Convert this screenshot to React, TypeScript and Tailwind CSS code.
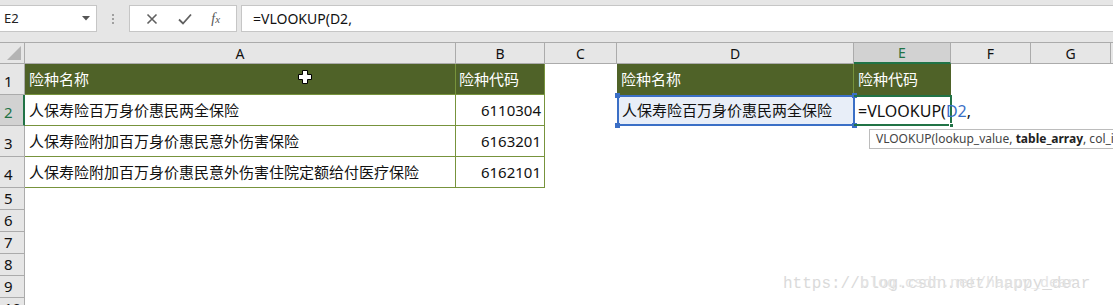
import React from "react";

const cellFont = {
  fontFamily: '"Noto Sans", "Noto Sans CJK SC", sans-serif',
};

const colLetters = [
  { key: "A", w: "w-[431px]" },
  { key: "B", w: "w-[89px]" },
  { key: "C", w: "w-[72px]" },
  { key: "D", w: "w-[237px]" },
  { key: "E", w: "w-[97px]" },
  { key: "F", w: "w-[80px]" },
  { key: "G", w: "w-[80px]" },
];

const FormulaBar: React.FC = () => (
  <div className="h-[43px] bg-[#e6e6e6] border-b border-[#ababab] flex items-start pt-[5px]">
    <div className="w-[97px] h-[27px] bg-white border border-[#c6c6c6] border-l-0 flex items-center justify-between pl-[4px] pr-[6px]">
      <span className="text-[13px] text-[#222]">E2</span>
      <svg width="8" height="5" viewBox="0 0 8 5">
        <path d="M0 0h8L4 4.5z" fill="#555" />
      </svg>
    </div>
    <div className="w-[32px] h-[27px] flex flex-col items-center justify-center gap-[2px]">
      <span className="w-[2px] h-[2px] bg-[#a0a0a0]" />
      <span className="w-[2px] h-[2px] bg-[#a0a0a0]" />
      <span className="w-[2px] h-[2px] bg-[#a0a0a0]" />
    </div>
    <div className="w-[108px] h-[27px] bg-white border border-[#c6c6c6] flex items-center justify-around px-[6px]">
      <svg width="12" height="12" viewBox="0 0 12 12">
        <path d="M1.5 1.5l9 9M10.5 1.5l-9 9" stroke="#606060" strokeWidth="1.6" />
      </svg>
      <svg width="14" height="12" viewBox="0 0 14 12">
        <path d="M1 6.5l4 4L13 1.5" stroke="#606060" strokeWidth="1.8" fill="none" />
      </svg>
      <span className="text-[14px] italic text-[#555]" style={{ fontFamily: '"Liberation Serif", serif' }}>
        f<span className="text-[11px]">x</span>
      </span>
    </div>
    <div className="ml-[4px] flex-1 h-[27px] bg-white border border-[#c6c6c6] border-r-0 flex items-center pl-[11px]">
      <span className="text-[14px] text-[#111]" style={{ fontFamily: '"Noto Sans", sans-serif' }}>
        =VLOOKUP(D2,
      </span>
    </div>
  </div>
);

const ColumnHeaders: React.FC = () => (
  <div className="flex h-[21px] bg-[#e6e6e6]">
    <div className="w-[25px] h-full border-r border-b border-[#ababab] flex items-end justify-end p-[3px]">
      <svg width="14" height="14" viewBox="0 0 14 14">
        <path d="M14 0v14H0z" fill="#b4b4b4" />
      </svg>
    </div>
    {colLetters.map((c) =>
      c.key === "E" ? (
        <div
          key={c.key}
          className={`${c.w} h-full bg-[#d2d2d2] border-r border-[#ababab] border-b-2 border-b-[#217346] flex items-center justify-center text-[14px] text-[#217346]`}
        >
          {c.key}
        </div>
      ) : (
        <div
          key={c.key}
          className={`${c.w} h-full border-r border-b border-[#ababab] flex items-center justify-center text-[14px] text-[#111]`}
        >
          {c.key}
        </div>
      )
    )}
    <div className="flex-1 h-full border-b border-[#ababab]" />
  </div>
);

const RowHead: React.FC<{ n: number; tall?: boolean; active?: boolean }> = ({ n, tall, active }) => (
  <div
    className={`w-[25px] ${tall ? "h-[31px] items-end pb-[2px]" : "h-[22px] items-center"} flex pl-[4px] border-b text-[15px] ${
      active
        ? "bg-[#d2d2d2] text-[#217346] border-r-2 border-r-[#217346] border-b-[#ababab]"
        : "bg-[#e6e6e6] text-[#111] border-r border-[#ababab]"
    }`}
  >
    {n}
  </div>
);

const dataRows = [
  { name: "人保寿险百万身价惠民两全保险", code: "6110304" },
  { name: "人保寿险附加百万身价惠民意外伤害保险", code: "6163201" },
  { name: "人保寿险附加百万身价惠民意外伤害住院定额给付医疗保险", code: "6162101" },
];

export default function App() {
  return (
    <div className="w-[1113px] h-[305px] bg-white overflow-hidden relative" style={cellFont}>
      <FormulaBar />
      <ColumnHeaders />

      {/* row 1 */}
      <div className="flex h-[31px]">
        <RowHead n={1} tall />
        <div className="w-[431px] h-full bg-[#4f6228] border-r border-b border-[#77933c] flex items-center pl-[4px] text-[15px] text-white">
          险种名称
        </div>
        <div className="w-[89px] h-full bg-[#4f6228] border-r border-b border-[#77933c] flex items-center pl-[3px] text-[15px] text-white">
          险种代码
        </div>
        <div className="w-[72px] h-full" />
        <div className="w-[237px] h-full bg-[#4f6228] border-r border-[#77933c] flex items-center pl-[4px] text-[15px] text-white">
          险种名称
        </div>
        <div className="w-[97px] h-full bg-[#4f6228] flex items-center pl-[4px] text-[15px] text-white">
          险种代码
        </div>
      </div>

      {dataRows.map((r, i) => (
        <div key={r.code} className="flex h-[31px]">
          <RowHead n={i + 2} tall active={i === 0} />
          <div className="w-[431px] h-full border-r border-b border-[#77933c] flex items-center pl-[4px] text-[15px] text-[#111]">
            {r.name}
          </div>
          <div className="w-[89px] h-full border-r border-b border-[#77933c] flex items-center justify-end pr-[3px] text-[15px] text-[#111]">
            {r.code}
          </div>
          {i === 0 && (
            <>
              <div className="w-[72px] h-full" />
              <div className="w-[238px] -mr-[1px] h-full bg-[#e8eef8] border-2 border-[#3b6fc6] flex items-center pl-[3px] text-[15px] text-[#111] relative">
                人保寿险百万身价惠民两全保险
                <span className="absolute -left-[4px] -top-[4px] w-[5px] h-[5px] bg-[#3b6fc6]" />
                <span className="absolute -right-[4px] -top-[4px] w-[5px] h-[5px] bg-[#3b6fc6]" />
                <span className="absolute -left-[4px] -bottom-[4px] w-[5px] h-[5px] bg-[#3b6fc6]" />
                <span className="absolute -right-[4px] -bottom-[4px] w-[5px] h-[5px] bg-[#3b6fc6]" />
              </div>
              <div className="w-[98px] h-full border-2 border-[#217346] border-l-0 flex items-center pl-[4px] text-[16px] text-[#111] relative">
                =VLOOKUP(<span className="text-[#3b6fc6]">D2</span>,
                <span className="absolute -right-[4px] -bottom-[4px] w-[5px] h-[5px] bg-[#217346] border border-white" />
              </div>
            </>
          )}
        </div>
      ))}

      {[5, 6, 7, 8, 9, 10].map((n) => (
        <div key={n} className="flex h-[22px]">
          <RowHead n={n} />
        </div>
      ))}

      {/* function tooltip */}
      <div className="absolute left-[869px] top-[129px] h-[20px] w-[260px] bg-white border border-[#bcbcbc] flex items-center pl-[6px] text-[12px] text-[#444] whitespace-nowrap">
        <span>
          VLOOKUP(lookup_value, <b className="text-[#222]">table_array</b>, col_index_num
        </span>
      </div>

      {/* mouse cursor */}
      <svg className="absolute left-[298px] top-[70px]" width="14" height="14" viewBox="0 0 14 14">
        <path
          d="M4.5 0.5h5v4h4v5h-4v4h-5v-4h-4v-5h4z"
          fill="#fff"
          stroke="#000"
          strokeWidth="1"
        />
      </svg>

      {/* watermark (two overlapping copies, as in the source gif) */}
      <div
        className="absolute left-[783px] top-[272px] text-[16px] text-[#dadada] whitespace-nowrap"
        style={{ fontFamily: '"Liberation Mono", monospace' }}
      >
        https://blog.csdn.net/happy_dear
      </div>
      <div
        className="absolute left-[860px] top-[273px] text-[15px] text-[#e4e4e4] whitespace-nowrap"
        style={{ fontFamily: '"Liberation Mono", monospace' }}
      >
        blog.csdn.net/happy_dear
      </div>
    </div>
  );
}
